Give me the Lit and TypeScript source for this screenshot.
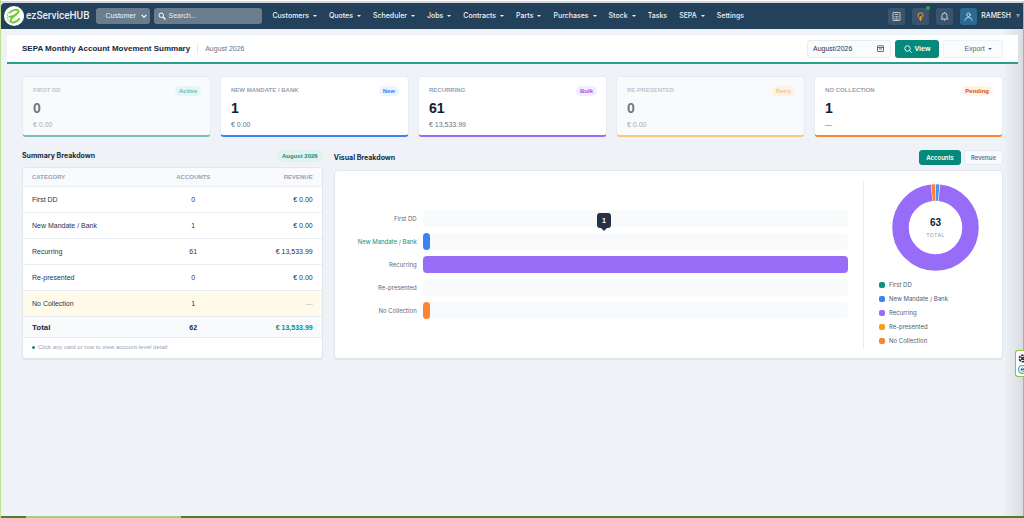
import { LitElement, html, svg, css } from "lit";
import { customElement, state } from "lit/decorators.js";
import { classMap } from "lit/directives/class-map.js";

interface Category {
  name: string;
  accounts: number;
  revenue: string;
  badge: string;
  tone: string;
  muted?: boolean;
  share: number;
}

const categories: Category[] = [
  { name: "First DD", accounts: 0, revenue: "€ 0.00", badge: "Active", tone: "teal", muted: true, share: 0 },
  { name: "New Mandate / Bank", accounts: 1, revenue: "€ 0.00", badge: "New", tone: "blue", share: 1.64 },
  { name: "Recurring", accounts: 61, revenue: "€ 13,533.99", badge: "Bulk", tone: "violet", share: 100 },
  { name: "Re-presented", accounts: 0, revenue: "€ 0.00", badge: "Retry", tone: "amber", muted: true, share: 0 },
  { name: "No Collection", accounts: 1, revenue: "—", badge: "Pending", tone: "orange", share: 1.64 },
];

const menu: [string, boolean][] = [
  ["Customers", true], ["Quotes", true], ["Scheduler", true], ["Jobs", true], ["Contracts", true],
  ["Parts", true], ["Purchases", true], ["Stock", true], ["Tasks", false], ["SEPA", true], ["Settings", false],
];

const tones = css`
  .teal { --tone: #0d9080; --tint: #d9f2ee; --ink: #0d9080; }
  .blue { --tone: #3b82f6; --tint: #eaf3ff; --ink: #3b82f6; }
  .violet { --tone: #976cf7; --tint: #f2edff; --ink: #8b5cf6; }
  .amber { --tone: #f5a011; --tint: #fdf0d8; --ink: #f0a030; }
  .orange { --tone: #fb8332; --tint: #fff3e6; --ink: #c8551b; }
`;

@customElement("top-bar")
export class TopBar extends LitElement {
  static styles = css`
    :host { display: block; font-family: "Liberation Sans", Arial, sans-serif; }
    .bar {
      display: flex; align-items: center; height: 26px; padding: 0 3px 0 3px;
      background: #24415b; color: #eef3f8; border-top-left-radius: 4px; font-size: 8px;
    }
    .brand { display: flex; align-items: center; gap: 2px; color: #e8edf3; text-decoration: none; font: 500 10px/12px Roboto, sans-serif; }
    .brand svg { width: 20px; height: 20px; }
    .picker { position: relative; display: flex; align-items: center; margin-left: 7px; }
    .picker select {
      appearance: none; width: 54px; height: 16px; padding: 0 12px 0 9px; border: 0; border-radius: 3px;
      background: #6a7d8e; color: #f2f5f8; font: 7px/16px "Liberation Sans", Arial, sans-serif;
    }
    .picker svg { position: absolute; right: 3px; width: 6px; height: 6px; pointer-events: none; }
    .search {
      display: flex; align-items: center; gap: 2px; height: 16px; margin-left: 4px;
      padding-left: 4px; box-sizing: border-box; width: 108px; border-radius: 3px; background: #6a7d8e;
    }
    .search svg { width: 8px; height: 8px; flex: none; }
    .search input {
      min-width: 0; flex: 1; border: 0; padding: 0; background: none; outline: none; color: #fff;
      font: 7px/16px "Liberation Sans", Arial, sans-serif;
    }
    .search input::placeholder { color: #e9eef2; opacity: 1; }
    nav { display: flex; gap: 12px; margin-left: 10px; font: 500 7px/12px Inter, sans-serif; }
    nav a { display: flex; align-items: center; gap: 4px; color: #eef3f8; text-decoration: none; }
    .caret { border: 2px solid transparent; border-top-color: currentColor; border-bottom: 0; }
    .tools { display: flex; align-items: center; gap: 7px; margin-left: auto; }
    .tool {
      position: relative; display: grid; place-items: center; width: 17px; height: 17px; padding: 0;
      border: 0; border-radius: 3px; background: #3b546c; color: #dbe4ec;
    }
    .tool svg { width: 9px; height: 9px; }
    .tip { color: #e8a13c; }
    .tip::after {
      content: ""; position: absolute; top: -2px; right: -1px; width: 4px; height: 4px;
      border-radius: 50%; background: #22a84a;
    }
    .user { background: #2b6a93; }
    .name { display: flex; align-items: center; gap: 5px; margin-left: -3px; padding: 0; border: 0; background: none; color: #f2f5f8; font: 500 7px/10px Inter, sans-serif; }
    .name .caret { color: #8495a5; border-top-width: 4px; }
  `;

  render() {
    return html`<header class="bar">
      <a class="brand" href="#">
        <svg viewBox="0 0 20 20" aria-hidden="true">
          <circle cx="10" cy="10" r="10" fill="#fff" />
          <path d="M4.6 6.2A7 7 0 0 0 6.600 16.4" fill="none" stroke="#86cd4c" stroke-width="1.3" stroke-dasharray="1.4 1" />
          <path d="M6.200 6.600C8 3.500 14 3 14.600 5.200c.5 2.600-7.400 5.400-8 9.200-.3 3.400 5.800 2.600 8.700-1.500M5.400 10.800c3.200 0 6-1.800 7.600-3.600" fill="none" stroke="#72c83c" stroke-width="1.900" stroke-linecap="round" />
        </svg>
        ezServiceHUB
      </a>
      <label class="picker">
        <select aria-label="Search type"><option>Customer</option><option>Job</option></select>
        <svg viewBox="0 0 10 10" aria-hidden="true"><path d="M1 3l4 4 4-4" fill="none" stroke="#fff" stroke-width="2" /></svg>
      </label>
      <label class="search">
        <svg viewBox="0 0 16 16" aria-hidden="true"><circle cx="6.500" cy="6.500" r="4.500" fill="none" stroke="#fff" stroke-width="2" /><path d="M10 10l5 5" stroke="#fff" stroke-width="2.400" /></svg>
        <input type="search" placeholder="Search..." aria-label="Search" />
      </label>
      <nav>${menu.map(([label, drop]) => html`<a href="#">${label}${drop ? html`<i class="caret"></i>` : ""}</a>`)}</nav>
      <div class="tools">
        <button class="tool" aria-label="Calculator">
          <svg viewBox="0 0 18 18" fill="none" stroke="currentColor" stroke-width="1.600"><rect x="2" y="1" width="14" height="16" rx="1" /><path d="M5.500 5h7M5 9h2M8 9h2M11 9h2M5 12h2M8 12h2M11 12h2M5 14.500h2M8 14.500h2M11 14.500h2" /></svg>
        </button>
        <button class="tool tip" aria-label="Tips">
          <svg viewBox="0 0 18 18" fill="none" stroke="currentColor" stroke-width="2"><path d="M6.500 12.500c0-2-2.500-3-2.500-6a5 5 0 0 1 10 0c0 3-2.500 4-2.500 6zM7 15h4M8 17.200h2M9 12V8" /></svg>
        </button>
        <button class="tool" aria-label="Notifications">
          <svg viewBox="0 0 18 18" fill="none" stroke="currentColor" stroke-width="1.800" stroke-linejoin="round"><path d="M4 11V7a5 5 0 0 1 10 0v4l2 3H2zM7.500 15.500c.3 1.700 2.700 1.700 3 0M9 .500v1.500" /></svg>
        </button>
        <button class="tool user" aria-label="Profile">
          <svg viewBox="0 0 18 18" fill="none" stroke="currentColor" stroke-width="1.800" stroke-linecap="round"><circle cx="9" cy="5.500" r="3.500" /><path d="M2 16.500c0-3.500 3-5.500 7-5.500s7 2 7 5.500" /></svg>
        </button>
        <button class="name">RAMESH<i class="caret"></i></button>
      </div>
    </header>`;
  }
}

@customElement("title-bar")
export class TitleBar extends LitElement {
  static styles = css`
    :host { display: block; font-family: "Liberation Sans", Arial, sans-serif; }
    .bar {
      display: flex; align-items: center; height: 27px; padding: 0 15px 0 15px;
      background: #fff; border-bottom: 2px solid #2a9d8c;
    }
    h1 { margin: 0; font-size: 8px; line-height: 12px; color: #17263b; }
    .period { margin-left: 7px; padding-left: 7px; border-left: 1px solid #e3e8ee; font-size: 7px; line-height: 10px; color: #64748b; }
    .actions { display: flex; gap: 4px; margin-left: auto; }
    .month, button { box-sizing: border-box; height: 18px; border-radius: 3px; font-size: 7px; }
    .month { display: flex; align-items: center; width: 84px; padding: 0 6px 0 5px; border: 1px solid #e8ecf2; background: #fafbfd; }
    .month input { flex: 1; min-width: 0; border: 0; padding: 0; background: none; font: 7px/16px "Liberation Sans", Arial, sans-serif; color: #26364a; }
    .month svg { width: 7px; height: 7px; flex: none; }
    button { display: flex; align-items: center; justify-content: center; gap: 3px; font-family: inherit; }
    .view { width: 44px; padding: 0; border: 0; background: #05897a; color: #fff; font-size: 7px; font-weight: 700; }
    .view svg { width: 8px; height: 8px; }
    .export { width: 60px; padding: 0 0 0 10px; border: 1px solid #edf0f5; background: #fafbfd; color: #56657a; }
    .export i { border: 2px solid transparent; border-top-color: #56657a; border-bottom: 0; }
  `;

  render() {
    return html`<section class="bar">
      <h1>SEPA Monthly Account Movement Summary</h1>
      <span class="period">August 2026</span>
      <div class="actions">
        <label class="month">
          <input type="text" .value=${"August/2026"} aria-label="Month" />
          <svg viewBox="0 0 14 14" fill="none" stroke="#3f4b5a" stroke-width="1.600" aria-hidden="true"><rect x="1" y="1.500" width="12" height="11.500" rx="1" /><path d="M1 5h12M4 8h6" /></svg>
        </label>
        <button class="view">
          <svg viewBox="0 0 16 16" fill="none" stroke="#fff" stroke-width="1.800" aria-hidden="true"><circle cx="7" cy="7" r="5.500" /><path d="M11 11l4.500 4.500" /></svg>View
        </button>
        <button class="export">Export<i></i></button>
      </div>
    </section>`;
  }
}

@customElement("stat-cards")
export class StatCards extends LitElement {
  static styles = [tones, css`
    :host { display: block; font-family: "Liberation Sans", Arial, sans-serif; }
    .cards { display: grid; grid-template-columns: repeat(5, 1fr); gap: 9px; }
    .card {
      display: flex; justify-content: space-between; align-items: flex-start; padding: 9px 9px 6px 10px;
      border: 1px solid #e7ebf2; border-bottom: 2px solid var(--tone); border-radius: 4px; background: #fff;
    }
    .card.muted { background: #f9fafc; border-bottom-color: color-mix(in srgb, var(--tone) 55%, #f9fafc); }
    .muted > * { opacity: .6; }
    h2 { margin: 0; font-size: 6px; line-height: 8px; color: #94a3b8; text-transform: uppercase; }
    .count { margin: 6px 0 3px; font-size: 14px; line-height: 17px; font-weight: 700; color: #0f2136; }
    .sum { margin: 0; font-size: 7px; line-height: 9px; color: #64748b; }
    .badge { padding: 0 4px; border-radius: 5px; background: var(--tint); color: var(--ink); font-size: 6px; line-height: 10px; font-weight: 700; }
  `];

  render() {
    return html`<div class="cards">${categories.map((c) => html`
      <article class=${classMap({ card: true, [c.tone]: true, muted: !!c.muted })}>
        <div><h2>${c.name}</h2><p class="count">${c.accounts}</p><p class="sum">${c.revenue}</p></div>
        <span class="badge">${c.badge}</span>
      </article>`)}</div>`;
  }
}

@customElement("summary-table")
export class SummaryTable extends LitElement {
  static styles = css`
    :host { display: flex; flex-direction: column; gap: 5px; font-family: "Liberation Sans", Arial, sans-serif; }
    .head { display: flex; justify-content: space-between; align-items: center; }
    h2 { margin: 0; font: 700 7px/12px Inter, sans-serif; color: #1a2a3e; }
    .pill { padding: 0 5px; border-radius: 6px; background: #dff3f0; color: #0d8b7c; font-size: 6px; line-height: 12px; font-weight: 700; }
    .panel { flex: 1; border: 1px solid #e2e7ef; border-radius: 4px; background: #fff; overflow: hidden; box-shadow: 0 1px 1px #dfe4ec; }
    table { width: 100%; border-collapse: separate; border-spacing: 0; table-layout: fixed; font-size: 7px; color: #26364a; }
    th, td { box-sizing: border-box; height: 26px; padding: 0 9px; border-bottom: 1px solid #e9edf4; text-align: left; }
    .cat { width: 43%; }
    .acc { width: 28%; text-align: center; }
    .rev { width: 29%; text-align: right; }
    thead th { height: 19px; background: #f8fafc; color: #94a3b8; font-size: 6px; text-transform: uppercase; }
    tbody th { font-weight: 400; }
    .pending > * { background: #fffaea; border-bottom-color: #e6eaf0; }
    .pending .rev { color: #b4bcc6; }
    tfoot > tr > * { height: 21px; background: #f8fafc; font-weight: 700; color: #1a2a3e; }
    tfoot .cat { font-size: 8px; }
    tfoot .rev { color: #0d9080; }
    .hint { display: flex; align-items: center; gap: 3px; margin: 0; padding: 0 9px; font-size: 6px; line-height: 18px; color: #94a3b8; }
    .hint::before { content: ""; width: 3px; height: 3px; border-radius: 50%; background: #0d9080; }
  `;

  render() {
    return html`
      <div class="head"><h2>Summary Breakdown</h2><span class="pill">August 2026</span></div>
      <div class="panel">
        <table>
          <thead><tr><th class="cat">Category</th><th class="acc">Accounts</th><th class="rev">Revenue</th></tr></thead>
          <tbody>${categories.map((c) => html`
            <tr class=${classMap({ pending: c.badge === "Pending" })}>
              <th class="cat" scope="row">${c.name}</th><td class="acc">${c.accounts}</td><td class="rev">${c.revenue}</td>
            </tr>`)}</tbody>
          <tfoot><tr><th class="cat" scope="row">Total</th><td class="acc">62</td><td class="rev">€ 13,533.99</td></tr></tfoot>
        </table>
        <p class="hint">Click any card or row to view account-level detail</p>
      </div>`;
  }
}

@customElement("visual-breakdown")
export class VisualBreakdown extends LitElement {
  static styles = [tones, css`
    :host { display: flex; flex-direction: column; gap: 5px; font-family: "Liberation Sans", Arial, sans-serif; }
    .head { display: flex; align-items: center; gap: 3px; }
    h2 { flex: 1; margin: 0; font: 700 7px/12px Inter, sans-serif; color: #1a2a3e; }
    button { height: 15px; padding: 0 6px; border: 1px solid #e6eaf1; border-radius: 3px; background: #f8f9fc; color: #64748b; font: 600 6px/13px Inter, sans-serif; }
    button.on { border-color: #05897a; background: #05897a; color: #fff; }
    .panel { flex: 1; display: flex; padding: 10px; border: 1px solid #e2e7ef; border-radius: 4px; background: #fff; box-shadow: 0 1px 1px #dfe4ec; }
    .bars { flex: 1; display: flex; flex-direction: column; justify-content: center; gap: 6px; padding-right: 15px; }
    .row { display: grid; grid-template-columns: 72px 1fr; align-items: center; gap: 6px; }
    .label { text-align: right; white-space: nowrap; font: 6px/10px Inter, sans-serif; color: #5d6b7e; }
    .active .label { color: #0d9080; }
    .track { position: relative; height: 17px; border-radius: 4px; background: #f8fafc; }
    .fill { height: 100%; min-width: 7px; border-radius: 4px; background: var(--tone); }
    .tip { position: absolute; left: 41%; bottom: 22px; padding: 0 5px; border-radius: 3px; background: #283044; color: #fff; font-size: 7px; line-height: 15px; font-weight: 700; }
    .tip::after { content: ""; position: absolute; top: 100%; left: 50%; margin-left: -3px; border: 3px solid transparent; border-top-color: #283044; border-bottom: 0; }
    .side { width: 113px; padding-left: 15px; border-left: 1px solid #e6ebf1; }
    .donut { display: grid; place-items: center; padding: 3px 0 7px; }
    .donut > * { grid-area: 1 / 1; }
    .donut svg { width: 87px; height: 87px; }
    .middle { text-align: center; }
    .big { display: block; font-size: 10px; line-height: 14px; font-weight: 700; color: #0f2136; }
    .small { display: block; font: 500 5px/10px Inter, sans-serif; letter-spacing: .5px; color: #94a3b8; }
    ul { margin: 0; padding: 0; list-style: none; }
    li { display: flex; align-items: center; gap: 4px; font: 6px/14px Inter, sans-serif; color: #4f5d70; }
    li::before { content: ""; width: 6px; height: 6px; border-radius: 2px; background: var(--tone); }
  `];

  @state() private mode = "Accounts";

  render() {
    const arc = (color: string, length: number, start: number) => svg`
      <circle cx="43.5" cy="43.5" r="35" fill="none" stroke=${color} stroke-width="16.500" pathLength="100"
        stroke-dasharray="${length} ${100 - length}" stroke-dashoffset=${-start} transform="rotate(-90 43.5 43.5)" />`;
    return html`
      <div class="head">
        <h2>Visual Breakdown</h2>
        ${["Accounts", "Revenue"].map((m) => html`
          <button class=${classMap({ on: m === this.mode })} @click=${() => (this.mode = m)}>${m}</button>`)}
      </div>
      <div class="panel">
        <div class="bars">${categories.map((c) => html`
          <div class=${classMap({ row: true, [c.tone]: true, active: c.badge === "New" })}>
            <span class="label">${c.name}</span>
            <div class="track">
              ${c.share ? html`<div class="fill" style="width:${c.share}%"></div>` : ""}
              ${c.badge === "New" ? html`<span class="tip">${c.accounts}</span>` : ""}
            </div>
          </div>`)}</div>
        <div class="side">
          <div class="donut">
            <svg viewBox="0 0 87 87" aria-hidden="true">
              ${arc("#4b93f7", 1.4, 0.1)}${arc("#976cf7", 96.4, 1.8)}${arc("#fb8332", 1.4, 98.4)}
            </svg>
            <div class="middle"><span class="big">63</span><span class="small">TOTAL</span></div>
          </div>
          <ul>${categories.map((c) => html`<li class=${c.tone}>${c.name}</li>`)}</ul>
        </div>
      </div>`;
  }
}

@customElement("app-root")
export class AppRoot extends LitElement {
  static styles = css`
    :host { display: block; font-family: "Liberation Sans", Arial, sans-serif; }
    .window {
      position: relative; display: flex; flex-direction: column; box-sizing: border-box; min-height: 100vh;
      padding-top: 1px; border-left: 1px solid #bfe08f; background: #fff;
    }
    .page { flex: 1; border-top: 2px solid #d4d7de; border-right: 1px solid #a9adb3; background: linear-gradient(to left, #d9dce1, #eff2f7 20px); }
    .sheet { display: block; margin: 6px 5px 0 6px; }
    .content { display: flex; flex-direction: column; gap: 13px; padding: 12px 15px 20px 15px; }
    .split { display: grid; grid-template-columns: 31fr 69fr; gap: 11px; }
    .edge { height: 2px; background: linear-gradient(to right, #4f7d2c 25px, #a8cf78 25px 180px, #4f7d2c 180px); }
    .dock {
      position: absolute; right: 0; top: 350px; display: grid; gap: 2px; width: 9px; box-sizing: border-box; padding: 3px 0 2px 2px;
      border: 1px solid #8cc63f; border-right: 0; border-radius: 3px 0 0 3px; background: #fff; overflow: hidden;
    }
    .dock svg { width: 9px; height: 9px; display: block; }
  `;

  render() {
    return html`<div class="window">
      <div class="page">
        <top-bar></top-bar>
        <main class="sheet">
          <title-bar></title-bar>
          <div class="content">
            <stat-cards></stat-cards>
            <div class="split"><summary-table></summary-table><visual-breakdown></visual-breakdown></div>
          </div>
        </main>
      </div>
      <div class="edge"></div>
      <aside class="dock">
        <svg viewBox="0 0 18 18" fill="none" stroke="#20262e" stroke-width="3"><circle cx="9" cy="9" r="6.500" stroke-dasharray="5 1.800" /><path d="M6 6l6 6M12 6l-6 6" /></svg>
        <svg viewBox="0 0 18 18" fill="none" stroke="#15919b" stroke-width="2"><rect x="1.500" y="1.500" width="15" height="15" rx="5" /><path d="M6 9h6c0-4-6-4-6 0s4 4 6 2.500" /></svg>
      </aside>
    </div>`;
  }
}
